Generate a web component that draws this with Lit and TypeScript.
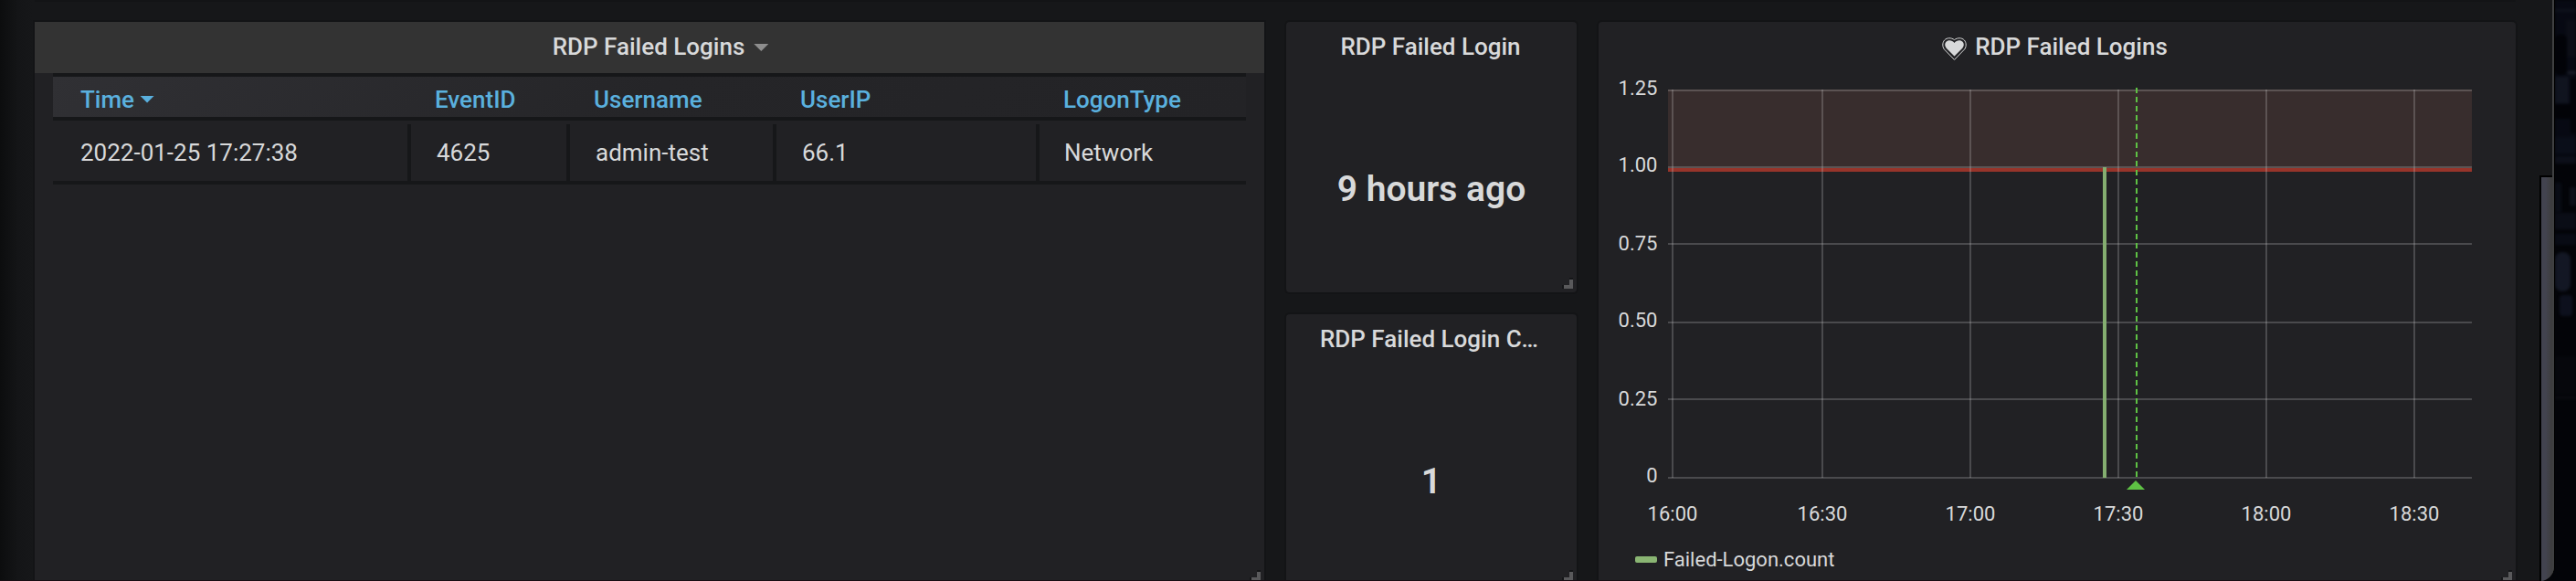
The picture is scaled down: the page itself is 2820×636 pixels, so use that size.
import { LitElement, html, svg, css } from "lit";
import { customElement } from "lit/decorators.js";

const hLines = [98, 182, 266, 352, 436, 522];
const yLabels = ["1.25", "1.00", "0.75", "0.50", "0.25", "0"];
const vLines = [1830, 1994, 2156, 2318, 2480, 2642];
const xLabels = ["16:00", "16:30", "17:00", "17:30", "18:00", "18:30"];
const yBase = [104, 188, 274, 358, 444, 528];

@customElement("metric-chart")
class MetricChart extends LitElement {
  static styles = css`
    :host { display: block; }
    svg { display: block; }
    .label { font: 400 22px Roboto, sans-serif; fill: #d8d9da; }
    .end { text-anchor: end; }
    .mid { text-anchor: middle; }
    .grid { fill: #c8c8c8; fill-opacity: 0.25; }
  `;
  render() {
    return html`<svg width="1004" height="516" viewBox="1750 80 1004 516">
      <rect x="1826" y="98" width="880" height="86" fill="#da8070" fill-opacity="0.12" />
      <rect x="1826" y="184" width="880" height="4" fill="#97342a" />
      ${hLines.map((y) => svg`<rect class="grid" x="1826" y=${y} width="880" height="2" />`)}
      ${vLines.map((x) => svg`<rect class="grid" x=${x} y="98" width="2" height="425" />`)}
      <rect x="2302" y="183" width="4" height="340" fill="#84ae70" />
      <path d="M2339 96V526" stroke="#5ec244" stroke-width="2" stroke-dasharray="6 4" />
      <path d="M2338 526l10 10h-20z" fill="#5ec244" />
      ${yLabels.map((t, i) => svg`<text class="label end" x="1814.5" y=${yBase[i]}>${t}</text>`)}
      ${xLabels.map((t, i) => svg`<text class="label mid" x=${vLines[i] + 1} y="570">${t}</text>`)}
    </svg>`;
  }
}

@customElement("app-root")
class AppRoot extends LitElement {
  static styles = css`
    :host { display: block; height: 636px; overflow: hidden; background: #030408; font-family: Roboto, sans-serif; color: #d8d9da; }
    * { box-sizing: border-box; }
    .screen { display: flex; height: 636px; }
    .window { position: relative; width: 2797px; height: 636px; display: flex; border-right: 1px solid #000; overflow: hidden;
      background: linear-gradient(90deg, #0c0d0e 0, #141517 20px, #161719 36px, #161719 100%); border-radius: 0 0 16px 0; }
    .board { width: 2780px; padding: 24px 0 0 38px; display: grid; grid-template-columns: 1346px 318px 1004px; column-gap: 24px; }
    .panel { position: relative; background: #212124; border-radius: 4px; box-shadow: 0 0 0 2px #131416; }
    .tall { height: 640px; }
    .table-panel { border-radius: 0; }
    .stack { display: grid; grid-template-rows: 296px 296px; row-gap: 24px; }
    .head { height: 56px; padding: 0 18px 0 16px; display: flex; align-items: center; justify-content: center; font-size: 26px; font-weight: 500; line-height: 56px; }
    .head.hover { background: #333; }
    .head.alert { padding-right: 21px; }
    .head.count { padding-right: 21px; }
    .title { white-space: nowrap; padding-bottom: 2px; line-height: 54px; }
    .caret { width: 16px; height: 8px; margin: 0 -26px 0 10px; background: #8e8e8e; clip-path: polygon(0 0, 100% 0, 50% 100%); }
    .heart { width: 27px; height: 25px; margin: 5px 9px 2px 0; }
    .value { height: 240px; display: flex; align-items: center; justify-content: center; font-size: 39px; font-weight: 600; padding-top: 13px; }
    .corner { position: absolute; right: 4px; bottom: 4px; width: 12px; height: 12px; }
    .corner.low { bottom: auto; top: 600px; }
    .table { margin: 0 20px; font-size: 26px; }
    .row { display: grid; grid-template-columns: 392px 174px 226px 288px 1fr; }
    .thead { height: 52px; border-top: 4px solid #161719; border-bottom: 4px solid #161719; background: linear-gradient(135deg, #303034, #252528 50%, #232326); color: #5ab0de; font-weight: 500; }
    .thead span { padding: 6px 0 0 26px; display: flex; align-items: center; height: 44px; }
    .thead span:first-child { padding-left: 30px; }
    .thead .caret { background: #5ab0de; margin: 0 0 1px 6px; }
    .tbody { height: 70px; padding-top: 4px; border-bottom: 4px solid #161719; line-height: 62px; }
    .tbody span { padding-left: 28px; border-right: 4px solid #161719; }
    .tbody span:first-child { padding-left: 30px; }
    .tbody span:last-child { border-right: 0; padding-left: 27px; }
    .legend { display: flex; align-items: center; padding-left: 40px; height: 33px; font-size: 22px; gap: 7px; }
    .swatch { width: 24px; height: 7px; border-radius: 2px; background: #8ab573; }
    .scroll { width: 16px; margin-top: 192px; border: solid #000; border-width: 2px 0 0 2px; background: linear-gradient(90deg, #42434f, #42434f 35%, #3e3e40 75%, #393939); }
    .edge { position: absolute; right: 0; top: 0; bottom: 0; width: 2px; background: #3f4041; }
    .topline { position: absolute; left: 38px; top: 0; width: 2716px; height: 2px; background: #131416; }
    .bottomline { position: absolute; left: 0; bottom: 0; width: 2780px; height: 1px; background: #180d13; }
    .wall { width: 23px; height: 636px; }
    .soft { filter: blur(1.500px); opacity: 0.85; }
  `;
  corner(kind = "") {
    return html`<svg class="corner ${kind}" viewBox="0 0 12 12"><path d="M0 8H2V12H0zM8 0H12V2H8z" fill="#151618" /><path d="M8 2h4v10H2V8h6z" fill="#59595b" /></svg>`;
  }
  render() {
    return html`<div class="screen">
      <div class="window">
        <div class="board">
          <section class="panel tall table-panel">
            <div class="head hover"><span class="title">RDP Failed Logins</span><i class="caret"></i></div>
            <div class="table">
              <div class="row thead"><span>Time<i class="caret"></i></span><span>EventID</span><span>Username</span><span>UserIP</span><span>LogonType</span></div>
              <div class="row tbody"><span>2022-01-25 17:27:38</span><span>4625</span><span>admin-test</span><span>66.1</span><span>Network</span></div>
            </div>
            ${this.corner("low")}
          </section>
          <div class="stack">
            <section class="panel"><div class="head"><span class="title">RDP Failed Login</span></div><div class="value">9 hours ago</div>${this.corner()}</section>
            <section class="panel"><div class="head count"><span class="title">RDP Failed Login C…</span></div><div class="value">1</div>${this.corner()}</section>
          </div>
          <section class="panel tall">
            <div class="head alert">
              <svg class="heart" viewBox="0 0 27 25"><path d="M13.500 24.400 2.600 13.200C.2 10.400 .2 5.800 2.600 3 5.500 0 10 .1 13.500 2.600 17 .1 21.500 0 24.400 3c2.400 2.800 2.400 7.400 0 10.200z" fill="none" stroke="#d8d9da" stroke-width="1" /><path d="M13.500 20.500 4.700 11.700C2.700 9.500 2.700 6.500 4.700 4.600c2.600-2.300 6.600-1.600 8.800 1.300 2.200-2.900 6.200-3.600 8.800-1.300 2 1.900 2 4.900 0 7.100z" fill="#d8d9da" /></svg>
              <span class="title">RDP Failed Logins</span>
            </div>
            <metric-chart></metric-chart>
            <div class="legend"><i class="swatch"></i><span>Failed-Logon.count</span></div>
            ${this.corner("low")}
          </section>
        </div>
        <div class="scroll"></div>
        <div class="edge"></div><div class="topline"></div><div class="bottomline"></div>
      </div>
      <svg class="wall" viewBox="0 0 23 636">
        <rect width="23" height="636" fill="#030408" />
        <g class="soft">
          <rect width="23" height="170" fill="#080b15" />
          <rect y="10" width="23" height="3" fill="#10141f" />
          <rect x="12" y="22" width="11" height="40" fill="#0e101a" />
          <rect y="38" width="13" height="44" rx="5" fill="#020308" />
          <rect x="14" y="78" width="9" height="3" fill="#202330" />
          <rect y="84" width="15" height="29" fill="#131724" />
          <rect y="114" width="23" height="16" fill="#020307" />
          <rect x="17" y="86" width="6" height="60" fill="#030409" />
          <rect y="150" width="23" height="18" fill="#0c101c" />
          <rect y="171" width="23" height="8" fill="#0e121d" />
          <rect y="200" width="7" height="32" fill="#0b0e18" />
          <rect x="16" y="205" width="7" height="20" fill="#10131d" />
          <rect y="233" width="23" height="18" fill="#0c0f19" />
          <rect y="256" width="23" height="12" fill="#090d17" />
          <rect y="276" width="17" height="43" rx="8" fill="#161b29" />
          <rect x="5" y="323" width="14" height="23" rx="4" fill="#0f1321" />
          <rect y="390" width="23" height="42" fill="#07080d" />
          <rect y="434" width="23" height="3" fill="#0c0d13" />
        </g>
      </svg>
    </div>`;
  }
}
